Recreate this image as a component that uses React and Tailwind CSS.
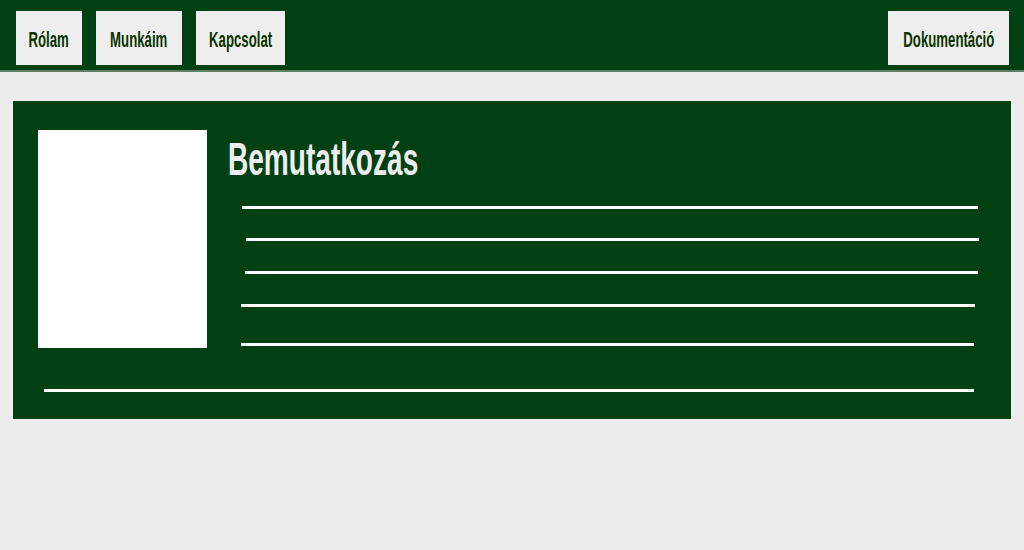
import React from 'react';

const NavButton = ({ w, children }) => (
  <button className={`flex h-[54px] ${w} items-center justify-center bg-[#eeeeee] pt-[2px] text-[22px] font-bold text-[#0a3300] font-['Liberation_Sans',Arial,sans-serif]`}>
    <span className="inline-block whitespace-nowrap scale-x-[0.6]">{children}</span>
  </button>
);

const lines = [
  'mt-[24px] ml-[14px] mr-[8px]',
  'mt-[29px] ml-[18px] mr-[7px]',
  'mt-[30px] ml-[17px] mr-[8px]',
  'mt-[30px] ml-[13px] mr-[11px]',
  'mt-[36px] ml-[13px] mr-[12px]',
];

export default function App() {
  return (
    <div className="min-h-[550px] bg-[#ededed]">
      <header className="flex h-[72px] items-start justify-between border-b-2 border-[#5f7f63] bg-[#004012] pt-[11px] pl-[16px] pr-[15px]">
        <nav className="flex gap-[14px]">
          <NavButton w="w-[66px]">Rólam</NavButton>
          <NavButton w="w-[86px]">Munkáim</NavButton>
          <NavButton w="w-[89px]">Kapcsolat</NavButton>
        </nav>
        <NavButton w="w-[121px]">Dokumentáció</NavButton>
      </header>

      <main className="mx-[13px] mt-[29px] h-[318px] bg-[#004012] pt-[29px] pb-[27px] px-[25px]">
        <div className="flex">
          <div className="h-[218px] w-[169px] shrink-0 bg-white" />
          <div className="flex-1 pl-[21px]">
            <h1 className="mt-[6px] h-[46px] text-[46px] font-bold leading-[46px] text-[#eeeeee] font-['Liberation_Sans',Arial,sans-serif]">
              <span className="inline-block origin-left whitespace-nowrap scale-x-[0.61]">Bemutatkozás</span>
            </h1>
            {lines.map((c, i) => (
              <div key={i} className={`h-[3px] bg-white ${c}`} />
            ))}
          </div>
        </div>
        <div className="mt-[41px] ml-[6px] mr-[12px] h-[3px] bg-white" />
      </main>
    </div>
  );
}
